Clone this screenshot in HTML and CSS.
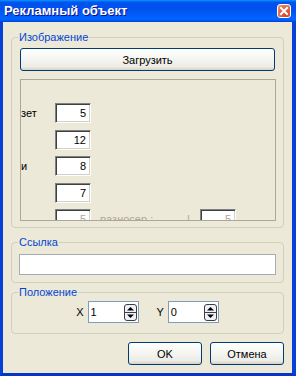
FILE: index.html
```html
<!DOCTYPE html>
<html lang="ru">
<head>
<meta charset="utf-8">
<link rel="stylesheet" href="styles.css">
</head>
<body>
<div class="window">
  <div class="titlebar">
    <span class="title">Рекламный объект</span>
    <span class="close"><svg width="12" height="12" viewBox="0 0 12 12"><path d="M3 3 L9 9 M9 3 L3 9" stroke="#fff" stroke-width="2" stroke-linecap="square"/></svg></span>
  </div>
  <div class="client">
    <fieldset class="group g-image">
      <legend>Изображение</legend>
      <div class="btn wide">Загрузить</div>
      <div class="panel">
        <div class="rows">
          <div class="row"><span class="lbl">зет</span><span class="num">5</span></div>
          <div class="row"><span class="lbl"></span><span class="num">12</span></div>
          <div class="row"><span class="lbl">и</span><span class="num">8</span></div>
          <div class="row"><span class="lbl"></span><span class="num">7</span></div>
          <div class="row"><span class="lbl"></span><span class="num dis">5</span><span class="note">разносер.:</span><span class="bar">|</span><span class="num dis">5</span></div>
        </div>
      </div>
    </fieldset>
    <fieldset class="group g-link">
      <legend>Ссылка</legend>
      <div class="textbox"></div>
    </fieldset>
    <fieldset class="group g-pos">
      <legend>Положение</legend>
      <div class="pos">
        <div class="coord"><span class="axis">X</span><div class="spin"><span class="val">1</span><svg width="13" height="17" viewBox="0 0 13 17"><rect x="0.5" y="0.5" width="12" height="16" rx="2.5" fill="#EEF2F8" stroke="#3C3C3C"/><line x1="1" y1="8.5" x2="12" y2="8.5" stroke="#3C3C3C"/><path d="M3 6.5 L6.5 3 L10 6.5 Z" fill="#000"/><path d="M3 10.5 L10 10.5 L6.5 14 Z" fill="#000"/></svg></div></div>
        <div class="coord"><span class="axis">Y</span><div class="spin"><span class="val">0</span><svg width="13" height="17" viewBox="0 0 13 17"><rect x="0.5" y="0.5" width="12" height="16" rx="2.5" fill="#EEF2F8" stroke="#3C3C3C"/><line x1="1" y1="8.5" x2="12" y2="8.5" stroke="#3C3C3C"/><path d="M3 6.5 L6.5 3 L10 6.5 Z" fill="#000"/><path d="M3 10.5 L10 10.5 L6.5 14 Z" fill="#000"/></svg></div></div>
      </div>
    </fieldset>
    <div class="actions">
      <div class="btn">OK</div>
      <div class="btn">Отмена</div>
    </div>
  </div>
</div>
</body>
</html>
```

FILE: styles.css
```css
html, body {
  margin: 0;
  padding: 0;
}
body {
  width: 296px;
  height: 376px;
  overflow: hidden;
  font-family: "Liberation Sans", Arial, sans-serif;
  font-size: 11px;
  color: #000;
}
.window {
  display: flex;
  flex-direction: column;
  width: 296px;
  height: 376px;
}
.titlebar {
  height: 22px;
  flex: none;
  display: flex;
  align-items: center;
  justify-content: space-between;
  padding: 0 5px 0 4px;
  background: linear-gradient(to bottom, #0997ff 0%, #0053ee 10%, #0050ee 40%, #0066ff 85%, #005bff 92%, #003dd7 100%);
}
.title {
  color: #fff;
  font-weight: bold;
  font-size: 13px;
  line-height: 22px;
  text-shadow: 1px 1px 0 #0f1089;
}
.close {
  width: 14px;
  height: 14px;
  box-sizing: border-box;
  border: 1px solid #fff;
  border-radius: 3px;
  background: radial-gradient(circle at 70% 80%, #cc4625 0%, #e26b4b 60%, #f0a088 100%);
  display: flex;
  align-items: center;
  justify-content: center;
}
.client {
  flex: 1;
  display: flex;
  flex-direction: column;
  background: #ece9d8;
  border-left: 3px solid #0841d8;
  border-right: 4px solid #0841d8;
  border-bottom: 3px solid #0735c4;
  padding: 9px 8px 8px 8px;
}
.group {
  margin: 0;
  min-width: 0;
  border: 1px solid #d0d0bf;
  border-radius: 4px;
}
.group legend {
  color: #0046d5;
  font-size: 11px;
  line-height: 13px;
  padding: 0 1px;
}
.g-image {
  padding: 4px 8px 6px 8px;
}
.g-image legend {
  margin-left: -2px;
}
.g-link {
  margin-top: 8px;
  padding: 5px 7px 7px 7px;
}
.g-link legend {
  margin-left: -1px;
}
.g-pos {
  margin-top: 3px;
  padding: 2px 8px 10px 8px;
}
.g-pos legend {
  margin-left: -2px;
}
.btn {
  box-sizing: border-box;
  height: 23px;
  width: 74px;
  border: 1px solid #003c74;
  border-radius: 3px;
  background: linear-gradient(to bottom, #ffffff 0%, #f4f4f0 50%, #ecebe6 85%, #d6d0c5 100%);
  display: flex;
  align-items: center;
  justify-content: center;
  font-size: 11px;
}
.btn.wide {
  width: auto;
}
.panel {
  margin-top: 8px;
  margin-right: -1px;
  height: 142px;
  box-sizing: border-box;
  border: 1px solid #aca899;
  overflow: hidden;
}
.rows {
  display: flex;
  flex-direction: column;
  gap: 6.5px;
  padding-top: 23px;
}
.row {
  display: flex;
  align-items: center;
  height: 20px;
}
.lbl {
  width: 34px;
  flex: none;
}
.num {
  width: 36px;
  height: 20px;
  flex: none;
  box-sizing: border-box;
  background: #fff;
  border: 1px solid;
  border-color: #808080 #fff #fff #808080;
  box-shadow: inset 1px 1px 0 #404040, inset -1px -1px 0 #d4d0c8;
  text-align: right;
  padding-right: 4px;
  line-height: 18px;
}
.num.dis {
  color: #aca899;
}
.note {
  width: 87px;
  margin-left: 9px;
  color: #aca899;
  white-space: nowrap;
  overflow: hidden;
}
.bar {
  width: 13px;
  color: #aca899;
}
.textbox {
  height: 21px;
  box-sizing: border-box;
  background: #fff;
  border: 1px solid #a5acb2;
}
.pos {
  display: flex;
  justify-content: center;
  align-items: center;
  gap: 18px;
}
.coord {
  display: flex;
  align-items: center;
  gap: 4px;
}
.spin {
  width: 51px;
  height: 22px;
  box-sizing: border-box;
  border: 1px solid #7f9db9;
  background: #fff;
  display: flex;
  align-items: center;
  padding-left: 2px;
  padding-right: 1px;
}
.val {
  flex: 1;
}
.actions {
  margin-top: 8px;
  display: flex;
  justify-content: flex-end;
  gap: 8px;
}
```
